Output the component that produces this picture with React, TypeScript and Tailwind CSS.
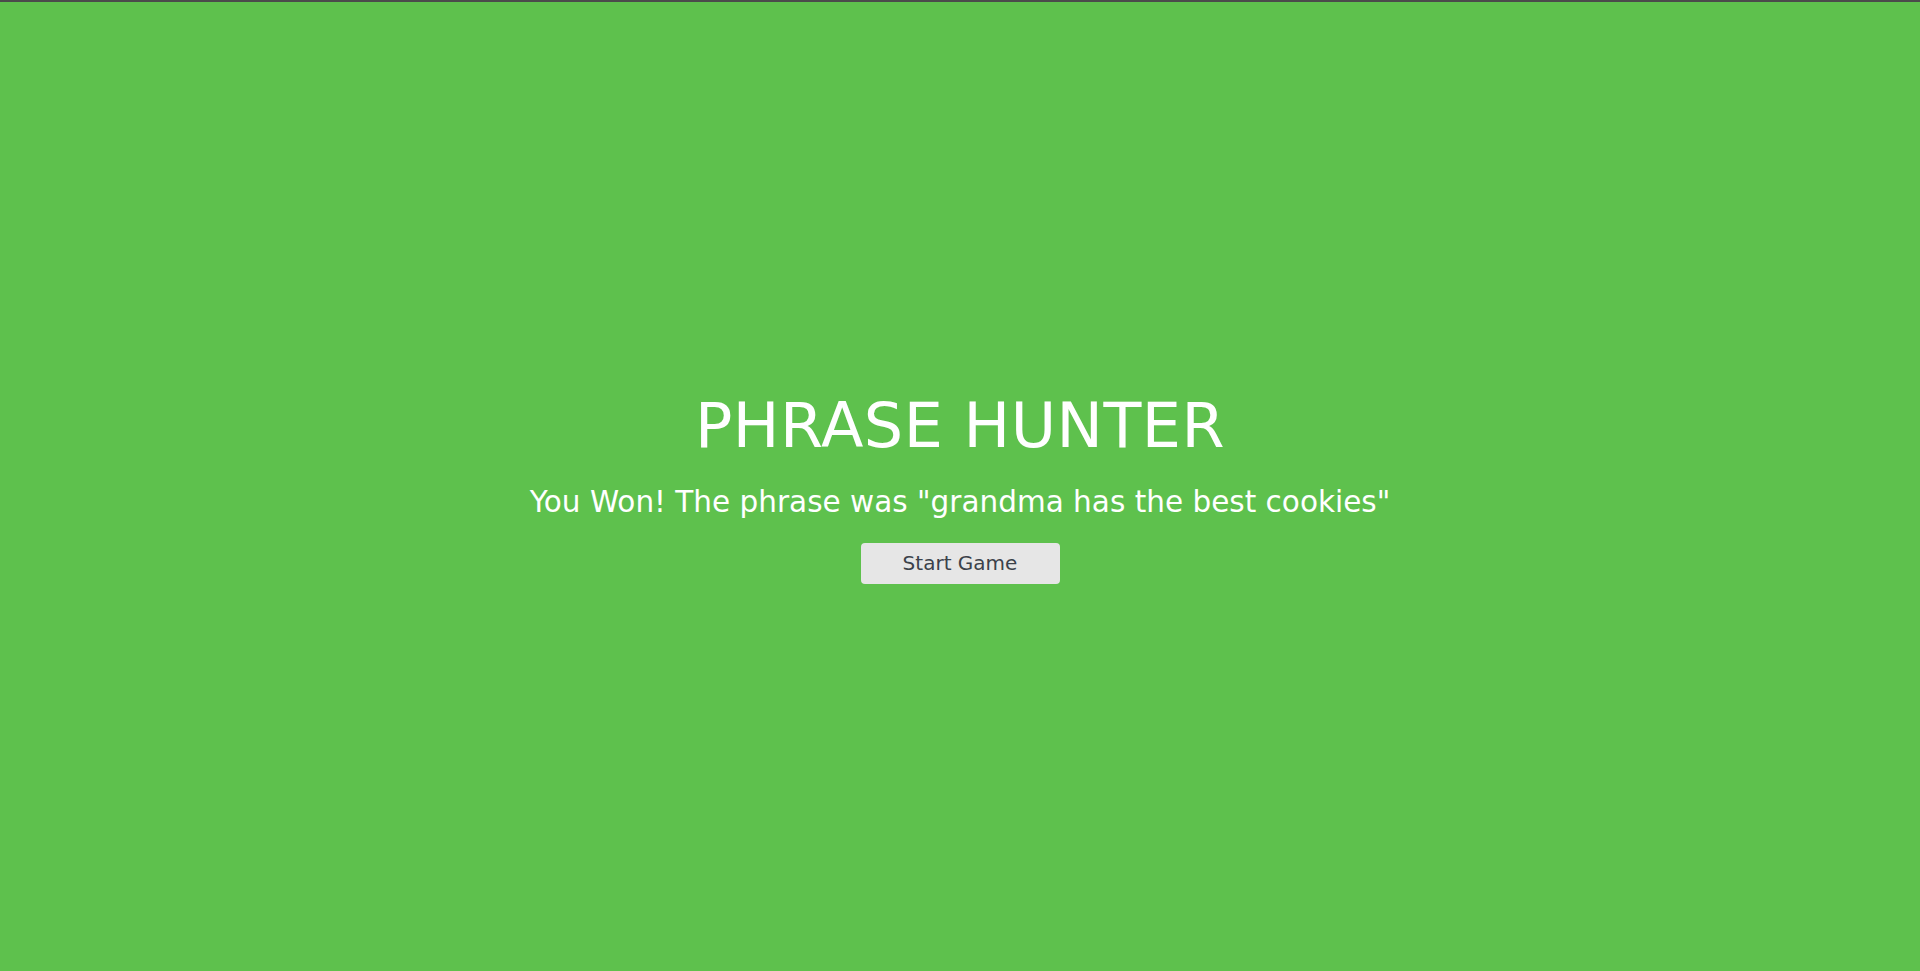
import React from 'react';

const App = () => {
  return (
    <div
      className="h-screen w-full bg-[#5ec14d] border-t-2 border-[#4b4b4b] flex flex-col items-center justify-center text-white"
      style={{ fontFamily: '"DejaVu Sans", "Open Sans", sans-serif' }}
    >
      <h2 className="mt-[6px] text-[62px] leading-none tracking-[0.5px] font-normal">PHRASE HUNTER</h2>
      <h1 className="mt-[31px] text-[29.5px] leading-none font-normal">
        You Won! The phrase was "grandma has the best cookies"
      </h1>
      <button className="mt-[25px] w-[199px] h-[41px] rounded-[4px] bg-[#e6e6e6] text-[#3b424a] text-[20px]">
        Start Game
      </button>
    </div>
  );
};

export default App;
